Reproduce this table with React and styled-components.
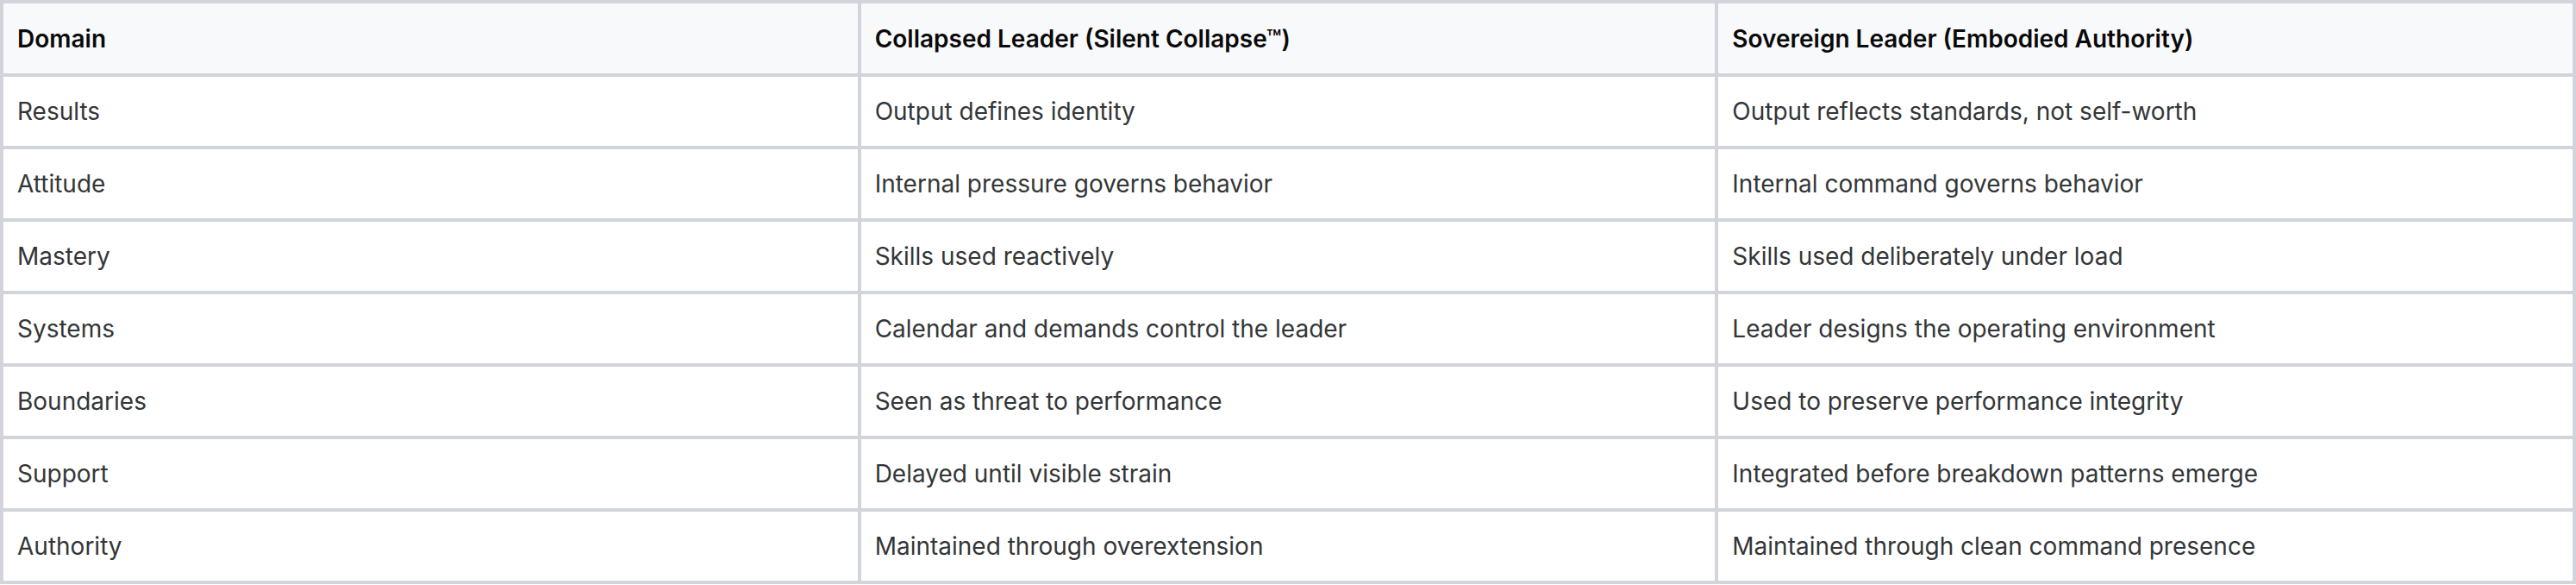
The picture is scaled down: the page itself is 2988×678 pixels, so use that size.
import React from 'react';
import styled, { createGlobalStyle } from 'styled-components';

const GlobalStyle = createGlobalStyle`
  html, body {
    margin: 0;
    padding: 0;
    background: #ffffff;
  }
  body {
    font-family: Inter, "Noto Sans", "Liberation Sans", sans-serif;
  }
`;

const Table = styled.table`
  width: 100%;
  border-collapse: collapse;
  table-layout: fixed;
  border: 4px solid #d1d5db;
  font-size: 28px;
  line-height: 48px;
`;

const HeadRow = styled.tr`
  background-color: #f8f9fb;
`;

const HeadCell = styled.th`
  text-align: left;
  font-weight: 600;
  color: #0a0a0a;
  padding: 17px 16px 16px;
  border: 4px solid #d1d5db;
`;

const Cell = styled.td`
  color: #333638;
  font-weight: 400;
  padding: 16px;
  border: 4px solid #d1d5db;
`;

const rows = [
  ['Results', 'Output defines identity', 'Output reflects standards, not self-worth'],
  ['Attitude', 'Internal pressure governs behavior', 'Internal command governs behavior'],
  ['Mastery', 'Skills used reactively', 'Skills used deliberately under load'],
  ['Systems', 'Calendar and demands control the leader', 'Leader designs the operating environment'],
  ['Boundaries', 'Seen as threat to performance', 'Used to preserve performance integrity'],
  ['Support', 'Delayed until visible strain', 'Integrated before breakdown patterns emerge'],
  ['Authority', 'Maintained through overextension', 'Maintained through clean command presence'],
];

const App = () => (
  <>
    <GlobalStyle />
    <Table>
      <thead>
        <HeadRow>
          <HeadCell>Domain</HeadCell>
          <HeadCell>Collapsed Leader (Silent Collapse™)</HeadCell>
          <HeadCell>Sovereign Leader (Embodied Authority)</HeadCell>
        </HeadRow>
      </thead>
      <tbody>
        {rows.map((r) => (
          <tr key={r[0]}>
            {r.map((c, i) => (
              <Cell key={i}>{c}</Cell>
            ))}
          </tr>
        ))}
      </tbody>
    </Table>
  </>
);

export default App;
